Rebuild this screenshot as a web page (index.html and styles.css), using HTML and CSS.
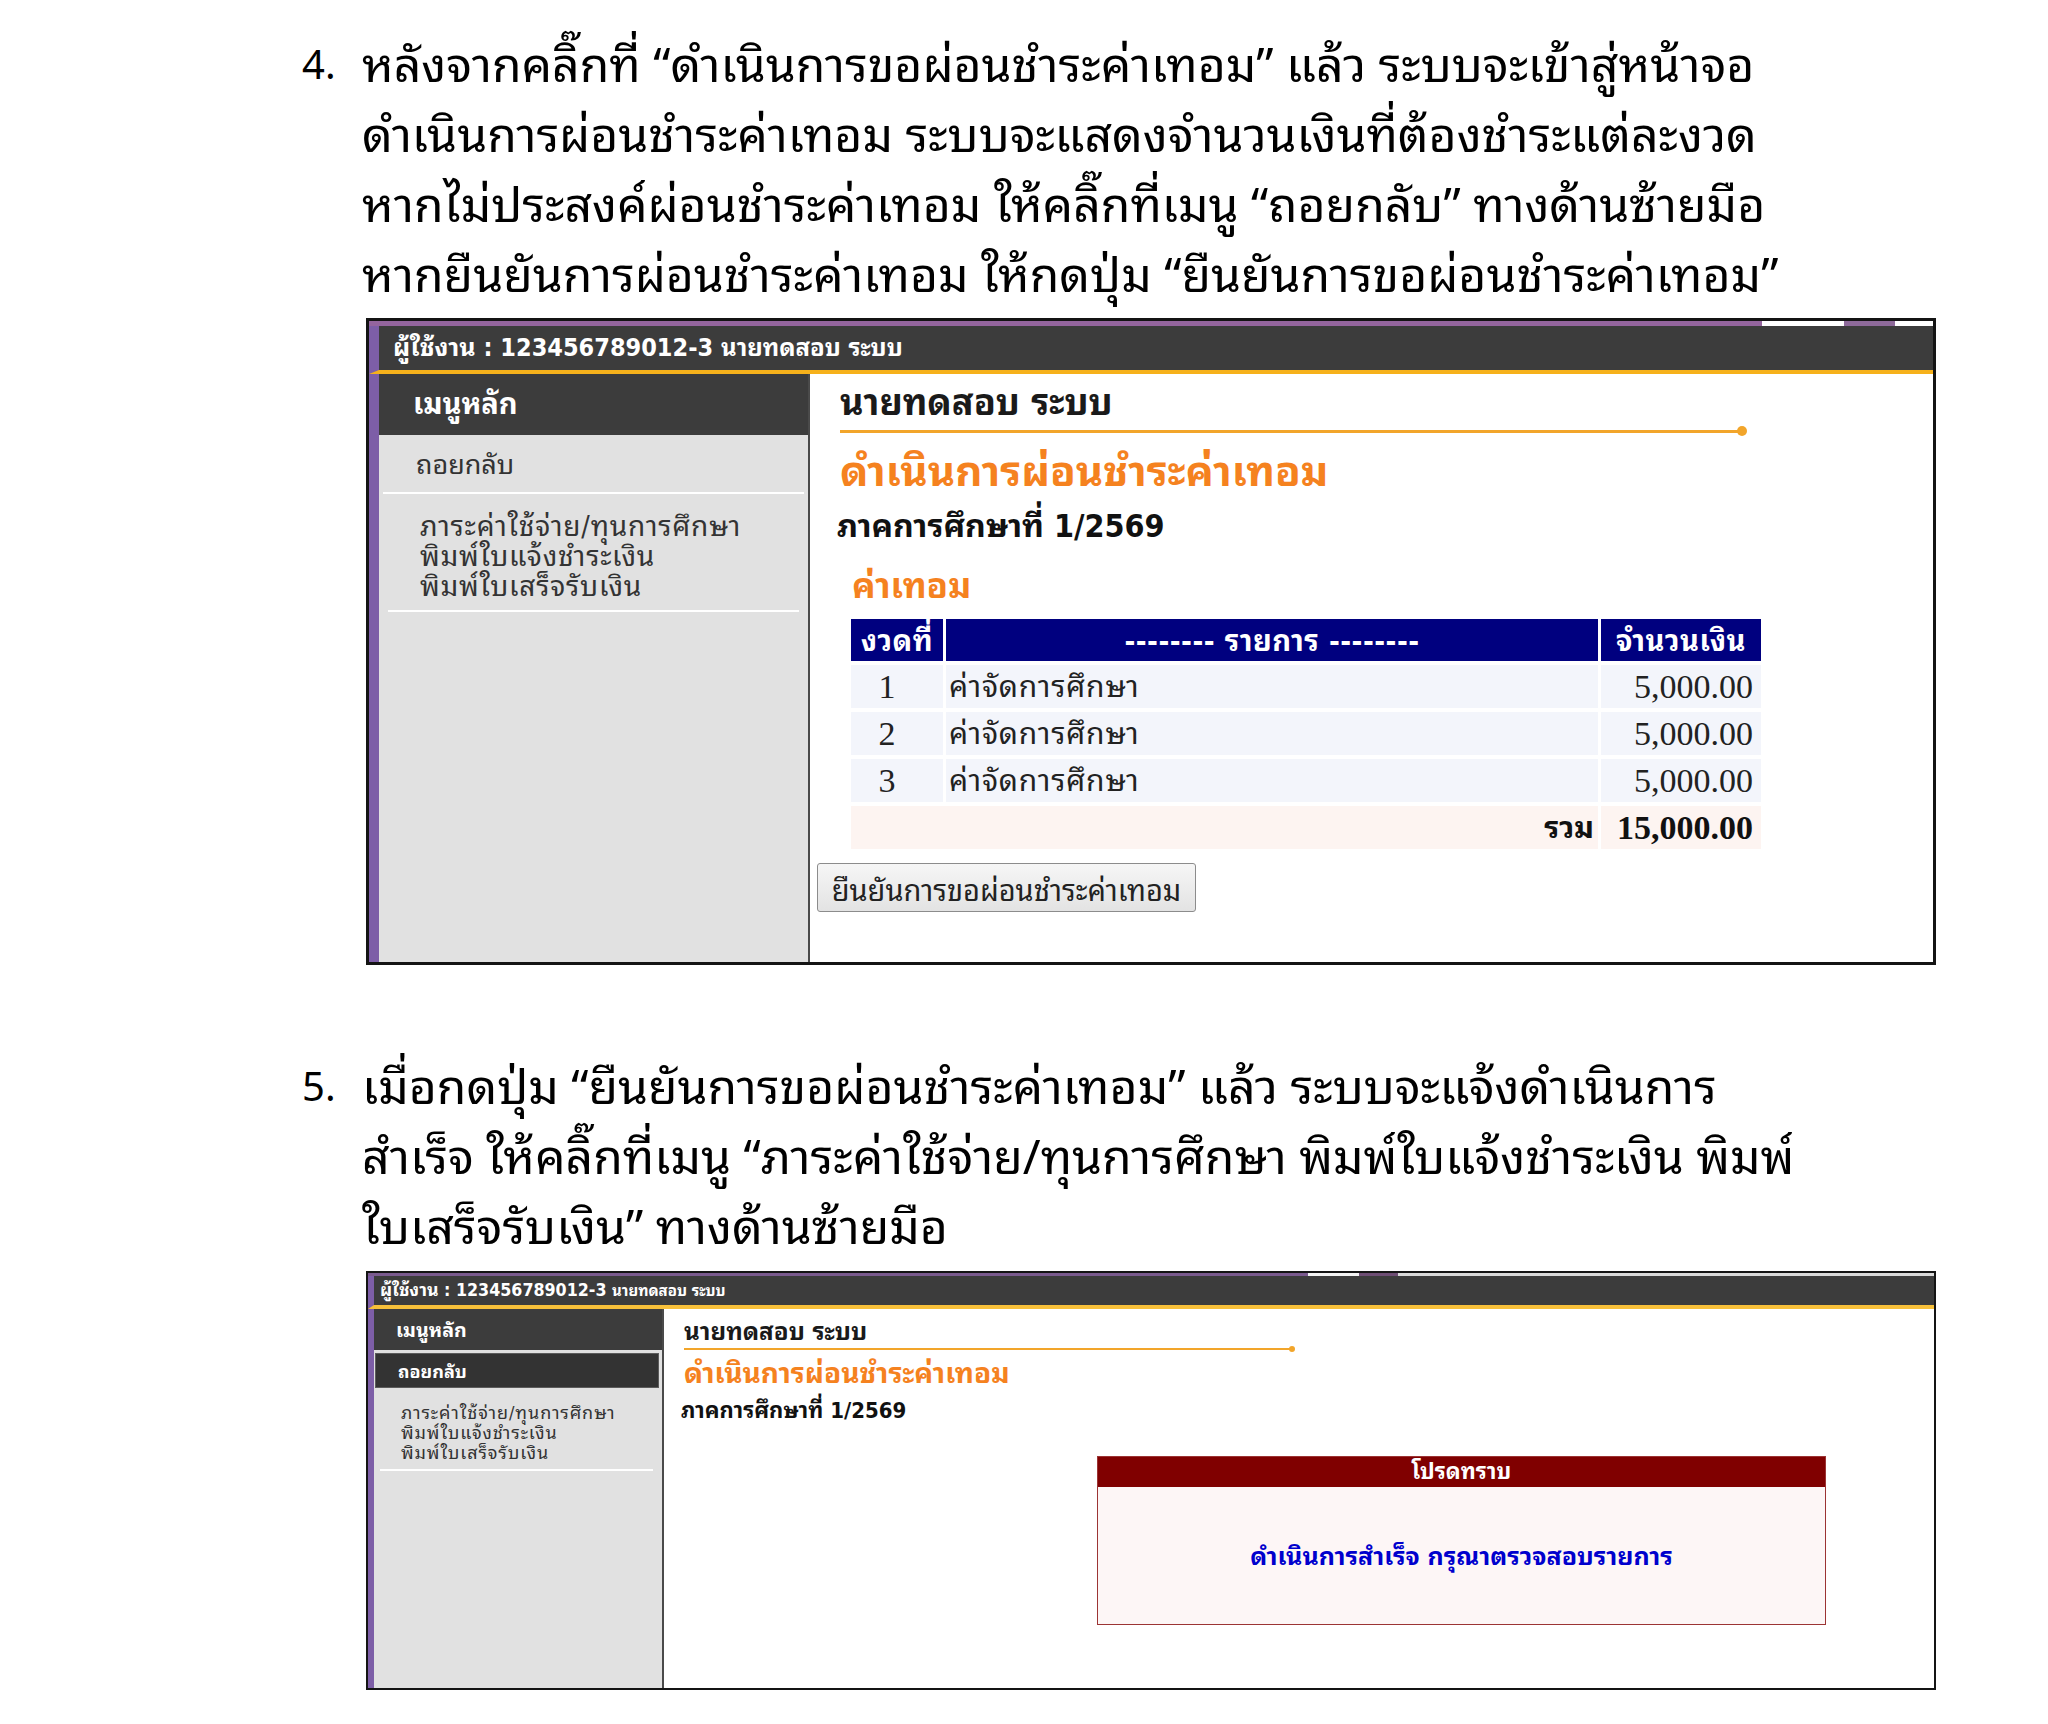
FILE: index.html
```html
<!DOCTYPE html>
<html lang="th">
<head>
<meta charset="utf-8">
<title>ผ่อนชำระค่าเทอม</title>
<link rel="stylesheet" href="styles.css">
</head>
<body>
<div class="page">
  <section class="step step4">
    <div class="num">4.</div>
    <div class="lines">
      <p class="line">หลังจากคลิ๊กที่ “ดำเนินการขอผ่อนชำระค่าเทอม” แล้ว ระบบจะเข้าสู่หน้าจอ</p>
      <p class="line">ดำเนินการผ่อนชำระค่าเทอม ระบบจะแสดงจำนวนเงินที่ต้องชำระแต่ละงวด</p>
      <p class="line">หากไม่ประสงค์ผ่อนชำระค่าเทอม ให้คลิ๊กที่เมนู “ถอยกลับ” ทางด้านซ้ายมือ</p>
      <p class="line">หากยืนยันการผ่อนชำระค่าเทอม ให้กดปุ่ม “ยืนยันการขอผ่อนชำระค่าเทอม”</p>
    </div>
  </section>

  <div class="shot shot-lg">
    <div class="stripe"></div>
    <div class="topbar"><span class="topbar-id">ผู้ใช้งาน : 123456789012-3</span> <span class="topbar-name">นายทดสอบ ระบบ</span></div>
    <div class="shot-body">
      <aside class="side">
        <div class="side-head">เมนูหลัก</div>
        <div class="side-item">ถอยกลับ</div>
        <div class="side-sep"></div>
        <div class="side-links">
          <div>ภาระค่าใช้จ่าย/ทุนการศึกษา</div>
          <div>พิมพ์ใบแจ้งชำระเงิน</div>
          <div>พิมพ์ใบเสร็จรับเงิน</div>
        </div>
        <div class="side-sep side-sep2"></div>
      </aside>
      <main class="content">
        <div class="user-name">นายทดสอบ ระบบ</div>
        <div class="rule"><span class="rule-line"></span><span class="rule-dot"></span></div>
        <div class="page-title">ดำเนินการผ่อนชำระค่าเทอม</div>
        <div class="term">ภาคการศึกษาที่ <span class="term-no">1/2569</span></div>
        <div class="fee-title">ค่าเทอม</div>
        <div class="fees">
          <div class="th">งวดที่</div>
          <div class="th">-------- รายการ --------</div>
          <div class="th">จำนวนเงิน</div>

          <div class="td td-no">1</div>
          <div class="td td-name">ค่าจัดการศึกษา</div>
          <div class="td td-amt">5,000.00</div>

          <div class="td td-no">2</div>
          <div class="td td-name">ค่าจัดการศึกษา</div>
          <div class="td td-amt">5,000.00</div>

          <div class="td td-no">3</div>
          <div class="td td-name">ค่าจัดการศึกษา</div>
          <div class="td td-amt">5,000.00</div>

          <div class="tf tf-label">รวม</div>
          <div class="tf tf-amt">15,000.00</div>
        </div>
        <button class="confirm" type="button">ยืนยันการขอผ่อนชำระค่าเทอม</button>
      </main>
    </div>
  </div>

  <section class="step step5">
    <div class="num">5.</div>
    <div class="lines">
      <p class="line">เมื่อกดปุ่ม “ยืนยันการขอผ่อนชำระค่าเทอม” แล้ว ระบบจะแจ้งดำเนินการ</p>
      <p class="line">สำเร็จ ให้คลิ๊กที่เมนู “ภาระค่าใช้จ่าย/ทุนการศึกษา พิมพ์ใบแจ้งชำระเงิน พิมพ์</p>
      <p class="line">ใบเสร็จรับเงิน” ทางด้านซ้ายมือ</p>
    </div>
  </section>

  <div class="shot shot-sm">
    <div class="stripe"></div>
    <div class="topbar"><span class="topbar-id">ผู้ใช้งาน : 123456789012-3</span> <span class="topbar-name">นายทดสอบ ระบบ</span></div>
    <div class="shot-body">
      <aside class="side">
        <div class="side-head">เมนูหลัก</div>
        <div class="side-item side-item-active">ถอยกลับ</div>
        <div class="side-links">
          <div>ภาระค่าใช้จ่าย/ทุนการศึกษา</div>
          <div>พิมพ์ใบแจ้งชำระเงิน</div>
          <div>พิมพ์ใบเสร็จรับเงิน</div>
        </div>
        <div class="side-sep side-sep2"></div>
      </aside>
      <main class="content">
        <div class="user-name">นายทดสอบ ระบบ</div>
        <div class="rule"><span class="rule-line"></span><span class="rule-dot"></span></div>
        <div class="page-title">ดำเนินการผ่อนชำระค่าเทอม</div>
        <div class="term">ภาคการศึกษาที่ <span class="term-no">1/2569</span></div>
        <div class="alert">
          <div class="alert-head">โปรดทราบ</div>
          <div class="alert-body">ดำเนินการสำเร็จ กรุณาตรวจสอบรายการ</div>
        </div>
      </main>
    </div>
  </div>
</div>
</body>
</html>
```

FILE: styles.css
```css
* { box-sizing: border-box; }

html, body {
  margin: 0;
  padding: 0;
  background: #ffffff;
}

body {
  width: 2048px;
  min-height: 1724px;
  font-family: "Noto Sans Thai Looped", "Noto Sans Thai", "Noto Sans", sans-serif;
  color: #000;
}

.page {
  padding-top: 26px;
}

/* ---------- instruction steps ---------- */
.step {
  display: grid;
  grid-template-columns: 60px auto;
  padding-left: 302px;
  font-size: 48.1px;
  line-height: 70px;
  color: #000;
}

.step .num {
  font-size: 40px;
}

.step .line {
  margin: 0;
  white-space: nowrap;
}

.step5 {
  margin-top: 83px;
}

/* ---------- screenshot frames ---------- */
.shot {
  margin-left: 366px;
  width: 1570px;
  border: 3px solid #141414;
  display: flex;
  flex-direction: column;
  font-family: Tahoma, "DejaVu Sans Condensed", "Noto Sans Thai Looped", "Noto Sans Thai", sans-serif;
  background: #fff;
}

.shot-lg {
  height: 647px;
  margin-top: 12px;
}

.shot-sm {
  height: 419px;
  margin-top: 13px;
  border-width: 2px;
}

.stripe {
  height: 5px;
  background: linear-gradient(to right, #94659e 0, #94659e 1393px, #ffffff 1393px, #ffffff 1475px, #8e6a9a 1475px, #8e6a9a 1526px, #ffffff 1526px);
}

.shot-sm .stripe {
  height: 3px;
  background: linear-gradient(to right, #7a5a8e 0, #7a5a8e 940px, #f2f2f2 940px, #f2f2f2 991px, #6e4e74 991px, #6e4e74 1030px, #d9d9d9 1030px);
}

.topbar {
  height: 48px;
  background: #3c3c3c;
  border-bottom: 4px solid #f6b11b;
  border-left: 10px solid #7d5ea7;
  color: #fff;
  font-weight: bold;
  font-size: 25px;
  line-height: 44px;
  padding-left: 14px;
  white-space: nowrap;
}

.topbar-name {
  font-size: 24px;
}

.shot-sm .topbar {
  height: 33px;
  border-left-width: 6px;
  border-bottom-color: #f7c03a;
  font-size: 17.7px;
  line-height: 29px;
  padding-left: 6px;
}

.shot-sm .topbar-name {
  font-size: 15px;
}

.shot-body {
  flex: 1;
  display: flex;
  border-left: 10px solid #7d5ea7;
}

.shot-sm .shot-body {
  border-left-width: 6px;
}

/* ---------- sidebar ---------- */
.side {
  width: 431px;
  flex: none;
  background: #e1e1e1;
  border-right: 2px solid #4a4a4a;
}

.side-head {
  height: 61px;
  background: #3c3c3c;
  color: #fff;
  font-weight: bold;
  font-size: 29px;
  line-height: 61px;
  padding-left: 34px;
}

.side-item {
  height: 57px;
  line-height: 60px;
  padding-left: 37px;
  font-size: 27px;
  color: #333;
}

.side-sep {
  height: 2px;
  background: #ffffff;
  margin: 0 4px;
}

.side-links {
  padding: 18px 0 8px 41px;
  font-size: 28px;
  letter-spacing: 0.8px;
  line-height: 30px;
  color: #333;
  white-space: nowrap;
}

.side-sep2 {
  margin: 0 9px;
}

.shot-sm .side {
  width: 290px;
}

.shot-sm .side-head {
  height: 41px;
  font-size: 19.6px;
  line-height: 44px;
  padding-left: 22px;
}

.shot-sm .side-item-active {
  height: 35px;
  margin: 3px 3px 0 1px;
  background: #333333;
  border: 1px solid #5c5c5c;
  color: #fff;
  font-weight: bold;
  font-size: 18px;
  line-height: 36px;
  padding-left: 22px;
}

.shot-sm .side-links {
  padding: 15px 0 6px 27px;
  font-size: 18px;
  letter-spacing: 0.9px;
  line-height: 20px;
}

.shot-sm .side-sep2 {
  margin: 0 9px 0 6px;
}

/* ---------- main content ---------- */
.content {
  flex: 1;
  padding-left: 30px;
  display: flex;
  flex-direction: column;
  align-items: flex-start;
}

.user-name {
  margin-top: 9px;
  font-size: 36px;
  line-height: 40px;
  font-weight: bold;
  color: #1a1a1a;
  white-space: nowrap;
}

.rule {
  display: flex;
  align-items: center;
  width: 907px;
  height: 10px;
  margin-top: 3px;
}

.rule-line {
  flex: 1;
  height: 3px;
  background: #f2a52a;
}

.rule-dot {
  width: 10px;
  height: 10px;
  border-radius: 50%;
  background: #f2a52a;
  margin-left: -4px;
}

.page-title {
  margin-top: 13px;
  font-size: 42px;
  line-height: 46px;
  font-weight: bold;
  color: #f5821f;
  white-space: nowrap;
}

.term {
  margin-top: 11px;
  margin-left: -3px;
  font-size: 32px;
  line-height: 40px;
  font-weight: bold;
  color: #111;
  white-space: nowrap;
}

.fee-title {
  margin-top: 17px;
  margin-left: 12px;
  font-size: 35px;
  line-height: 46px;
  font-weight: bold;
  color: #f5821f;
}

/* ---------- fee table ---------- */
.fees {
  margin-top: 10px;
  margin-left: 11px;
  display: grid;
  grid-template-columns: 92px 652px 160px;
  grid-auto-rows: 43px;
  grid-template-rows: 42px;
  gap: 4px 3px;
}

.th {
  background: #00007f;
  color: #fff;
  font-weight: bold;
  font-size: 29px;
  letter-spacing: 0.5px;
  line-height: 44px;
  text-align: center;
  white-space: nowrap;
  overflow: hidden;
}

.td {
  background: #f3f5fb;
  font-size: 30px;
  line-height: 43px;
  color: #222;
  white-space: nowrap;
}

.td-no {
  text-align: center;
  padding-right: 20px;
  font-family: "Liberation Serif", "Times New Roman", serif;
  font-size: 34px;
}

.td-name {
  padding-left: 3px;
  letter-spacing: 0.8px;
}

.td-amt {
  text-align: right;
  padding-right: 8px;
  font-family: "Liberation Serif", "Times New Roman", serif;
  font-size: 34px;
}

.tf {
  background: #fdf4f1;
  font-weight: bold;
  line-height: 43px;
  color: #111;
}

.tf-label {
  grid-column: 1 / 3;
  text-align: right;
  padding-right: 4px;
  font-size: 30px;
}

.tf-amt {
  text-align: right;
  padding-right: 8px;
  font-family: "Liberation Serif", "Times New Roman", serif;
  font-size: 34px;
}

.confirm {
  margin-top: 14px;
  margin-left: -23px;
  width: 379px;
  height: 49px;
  padding: 0;
  font-family: inherit;
  font-size: 29px;
  color: #222;
  background: linear-gradient(#f6f6f6, #e3e3e3);
  border: 1px solid #8c8c8c;
  border-radius: 3px;
  white-space: nowrap;
}

/* ---------- small screenshot content ---------- */
.shot-sm .content {
  padding-left: 20px;
}

.shot-sm .user-name {
  margin-top: 9px;
  font-size: 24.2px;
  line-height: 28px;
}

.shot-sm .rule {
  width: 611px;
  height: 6px;
  margin-top: 0;
}

.shot-sm .rule-line {
  height: 2px;
}

.shot-sm .rule-dot {
  width: 6px;
  height: 6px;
  margin-left: -2px;
}

.shot-sm .page-title {
  margin-top: 7px;
  font-size: 28px;
  line-height: 30px;
}

.shot-sm .term {
  margin-top: 9px;
  font-size: 22px;
  line-height: 26px;
}

.alert {
  margin-top: 32px;
  margin-left: 413px;
  width: 729px;
  border: 1px solid #9c3434;
  background: #fdf6f6;
}

.alert-head {
  height: 30px;
  background: #800000;
  color: #fff;
  font-weight: bold;
  font-size: 22px;
  line-height: 30px;
  text-align: center;
}

.alert-body {
  height: 137px;
  line-height: 140px;
  text-align: center;
  color: #0000cd;
  font-weight: bold;
  font-size: 25px;
  white-space: nowrap;
}
```
